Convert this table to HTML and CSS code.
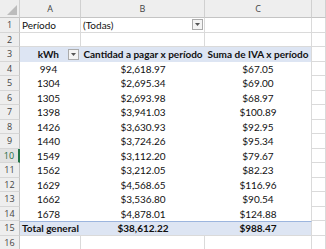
FILE: index.html
```html
<!DOCTYPE html>
<html>
<head>
<meta charset="utf-8">
<link rel="stylesheet" href="styles.css">
</head>
<body>
<div class="sheet">
  <div class="hd corner"><span class="tri"></span></div>
  <div class="hd col">A</div>
  <div class="hd col">B</div>
  <div class="hd col">C</div>
  <div class="hd col"></div>

  <div class="rh">1</div>
  <div class="c left">Período</div>
  <div class="c left todas">(Todas)<span class="dd"><svg width="5" height="3" viewBox="0 0 5 3"><path d="M0 0H5L2.5 3Z" fill="#555"/></svg></span></div>
  <div class="c"></div>
  <div class="c"></div>

  <div class="rh">2</div>
  <div class="c"></div>
  <div class="c"></div>
  <div class="c"></div>
  <div class="c"></div>

  <div class="rh">3</div>
  <div class="c head kwh"><span class="kl">kWh</span><span class="dd"><svg width="5" height="3" viewBox="0 0 5 3"><path d="M0 0H5L2.5 3Z" fill="#555"/></svg></span></div>
  <div class="c head ctr">Cantidad a pagar x período</div>
  <div class="c head ctr lastcol">Suma de IVA x período</div>
  <div class="c"></div>

  <div class="rh">4</div><div class="v a">994</div><div class="v b">$2,618.97</div><div class="v cc">$67.05</div><div class="c"></div>
  <div class="rh">5</div><div class="v a">1304</div><div class="v b">$2,695.34</div><div class="v cc">$69.00</div><div class="c"></div>
  <div class="rh">6</div><div class="v a">1305</div><div class="v b">$2,693.98</div><div class="v cc">$68.97</div><div class="c"></div>
  <div class="rh">7</div><div class="v a">1398</div><div class="v b">$3,941.03</div><div class="v cc">$100.89</div><div class="c"></div>
  <div class="rh">8</div><div class="v a">1426</div><div class="v b">$3,630.93</div><div class="v cc">$92.95</div><div class="c"></div>
  <div class="rh">9</div><div class="v a">1440</div><div class="v b">$3,724.26</div><div class="v cc">$95.34</div><div class="c"></div>
  <div class="rh active">10</div><div class="v a">1549</div><div class="v b">$3,112.20</div><div class="v cc">$79.67</div><div class="c"></div>
  <div class="rh">11</div><div class="v a">1562</div><div class="v b">$3,212.05</div><div class="v cc">$82.23</div><div class="c"></div>
  <div class="rh">12</div><div class="v a">1629</div><div class="v b">$4,568.65</div><div class="v cc">$116.96</div><div class="c"></div>
  <div class="rh">13</div><div class="v a">1662</div><div class="v b">$3,536.80</div><div class="v cc">$90.54</div><div class="c"></div>
  <div class="rh">14</div><div class="v a">1678</div><div class="v b">$4,878.01</div><div class="v cc">$124.88</div><div class="c"></div>

  <div class="rh">15</div>
  <div class="c total left">Total general</div>
  <div class="c total b">$38,612.22</div>
  <div class="c total cc">$988.47</div>
  <div class="c"></div>

  <div class="rh">16</div>
  <div class="c"></div>
  <div class="c"></div>
  <div class="c"></div>
  <div class="c"></div>
</div>
</body>
</html>
```
FILE: styles.css
```css
* { box-sizing: border-box; }
html, body { margin: 0; padding: 0; background: #fff; }
body { overflow: hidden; width: 326px; height: 249px; }

.sheet {
  display: grid;
  width: 326px;
  grid-template-columns: 20px 61px 124px 107px 1fr;
  grid-template-rows: 18px repeat(16, 14.5px);
  font-family: Lato, "Liberation Sans", sans-serif;
  font-size: 10px;
  color: #111;
}

.hd {
  background: #eeeeee;
  border-right: 1px solid #d0d0d0;
  border-bottom: 1px solid #c4c4c4;
  font-family: "Open Sans", "Liberation Sans", sans-serif;
  font-size: 9px;
  color: #444;
  display: flex;
  align-items: center;
  justify-content: center;
}
.corner { position: relative; }
.tri {
  position: absolute;
  right: 2px;
  bottom: 2px;
  width: 0;
  height: 0;
  border-left: 10px solid transparent;
  border-bottom: 10px solid #bcbcbc;
}

.rh {
  background: #eeeeee;
  border-right: 1px solid #c4c4c4;
  border-bottom: 1px solid #d6d6d6;
  font-family: "Open Sans", "Liberation Sans", sans-serif;
  font-size: 9px;
  color: #444;
  display: flex;
  align-items: center;
  justify-content: center;
}
.rh.active {
  background: #e2e2e2;
  border-right: 2px solid #217346;
  color: #1f6b41;
}

.c {
  border-right: 1px solid #dadada;
  border-bottom: 1px solid #dadada;
  display: flex;
  align-items: center;
  white-space: nowrap;
}
.left { padding-left: 2px; }
.todas { justify-content: space-between; padding-right: 1px; }

.dd {
  width: 11px;
  height: 11px;
  border: 1px solid #ababab;
  background: #f4f4f4;
  display: flex;
  align-items: center;
  justify-content: center;
}

.head {
  background: #dde5f3;
  border-right: none;
  border-bottom: none;
  font-weight: bold;
}
.head.lastcol { border-right: 1px solid #dadada; }
.kwh { justify-content: flex-end; padding-right: 2px; }
.kwh .kl { margin-right: 9px; }
.ctr { justify-content: center; }

.v {
  display: flex;
  align-items: center;
  white-space: nowrap;
  background: #fff;
}
.v.a { justify-content: center; padding-right: 4px; }
.v.b { justify-content: center; }
.v.cc { justify-content: center; border-right: 1px solid #dadada; }

.total {
  background: #dde5f3;
  border-top: 1px solid #9cb5de;
  border-right: none;
  font-weight: bold;
}
.total.b { justify-content: center; }
.total.cc { justify-content: center; border-right: 1px solid #dadada; }
```
